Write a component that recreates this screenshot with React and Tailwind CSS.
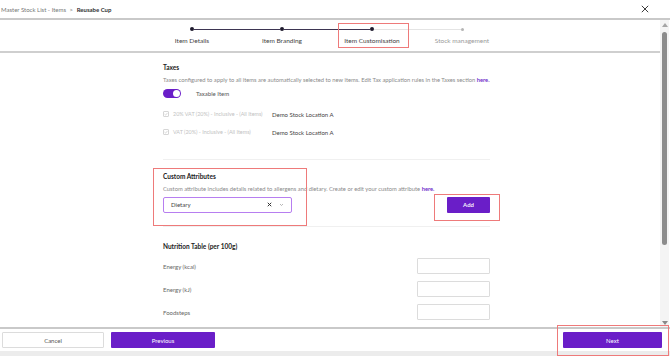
import React from 'react';

const PURPLE = 'bg-[#6a1ec8]';

const steps = [
  { label: 'Item Details', done: true },
  { label: 'Item Branding', done: true },
  { label: 'Item Customisation', done: true },
  { label: 'Stock management', done: false },
];

const Stepper = () => (
  <div className="h-[33px] border-b-2 border-[#cfcfcf] pl-[147px] flex">
    {steps.map((s, i) => {
      const leftDark = i > 0 && s.done;
      const rightDark = i < steps.length - 1 && steps[i + 1].done;
      return (
        <div key={s.label} className="w-[90px] flex flex-col items-center">
          <div className="w-full h-[18px] flex items-center">
            <div className={`flex-1 h-px ${i === 0 ? '' : leftDark ? 'bg-[#3d3552]' : 'bg-[#e4e4e4]'}`} />
            {s.done ? (
              <div className="w-[4px] h-[4px] rounded-full bg-[#1e1b2e]" />
            ) : (
              <div className="w-[3px] h-[3px] rounded-full bg-[#b5b5b5]" />
            )}
            <div className={`flex-1 h-px ${i === steps.length - 1 ? '' : rightDark ? 'bg-[#3d3552]' : 'bg-[#e4e4e4]'}`} />
          </div>
          <div className={`text-[6.5px] leading-none whitespace-nowrap ${s.done ? 'text-[#444]' : 'text-[#9a9a9a]'}`}>{s.label}</div>
        </div>
      );
    })}
  </div>
);

const Check = () => (
  <span className="w-[6px] h-[6px] border border-[#d6d6d6] rounded-[1px] flex items-center justify-center">
    <svg width="4" height="4" viewBox="0 0 8 8"><path d="M1 4.2 3.2 6.2 7 1.8" stroke="#c9c9c9" strokeWidth="1.4" fill="none" /></svg>
  </span>
);

const TaxRow = ({ label }) => (
  <div className="flex items-center h-[18px] whitespace-nowrap">
    <div className="w-[109px] flex items-center gap-[4px]">
      <Check />
      <span className="text-[5.4px] text-[#c2c2c2]">{label}</span>
    </div>
    <span className="text-[6px] text-[#444]">Demo Stock Location A</span>
  </div>
);

const NutritionRow = ({ label }) => (
  <div className="flex items-center justify-between h-[23px]">
    <span className="text-[6px] text-[#666]">{label}</span>
    <div className="w-[73px] h-[16px] border border-[#dcdcdc] rounded-[1px] bg-white" />
  </div>
);

export default function App() {
  return (
    <div className="w-[670px] h-[356px] bg-white flex flex-col overflow-hidden relative" style={{ fontFamily: 'Lato, "Open Sans", sans-serif' }}>
      {/* header */}
      <div className="h-[20px] border-b-2 border-[#c9c9c9] flex items-center justify-between pl-[1px] pr-[21px]">
        <div className="text-[6px] text-[#777]">
          Master Stock List - Items <span className="mx-[2px]">&gt;</span> <span className="font-bold text-[#333]">Reusabe Cup</span>
        </div>
        <svg width="8" height="8" viewBox="0 0 10 10"><path d="M1 1 9 9M9 1 1 9" stroke="#333" strokeWidth="1.2" /></svg>
      </div>

      {/* main */}
      <div className="flex-1 flex min-h-0">
        <div className="flex-1 flex flex-col min-w-0">
          <Stepper />
          <div className="flex-1 pl-[163px] pr-[170px] pt-[10px]">
            <div className="text-[6.5px] font-bold text-[#222]">Taxes</div>
            <div className="text-[5.8px] text-[#8a8a8a] mt-[3px] whitespace-nowrap">
              Taxes configured to apply to all items are automatically selected to new items. Edit Tax application rules in the Taxes section <span className="text-[#6a1ec8] font-semibold">here.</span>
            </div>
            <div className="flex items-center mt-[4px] h-[10px]">
              <div className={`w-[18px] h-[9px] rounded-full ${PURPLE} flex items-center justify-end pr-[1px]`}>
                <div className="w-[7px] h-[7px] rounded-full bg-white" />
              </div>
              <span className="text-[6px] text-[#555] ml-[15px]">Taxable Item</span>
            </div>
            <div className="mt-[7px]">
              <TaxRow label="20% VAT (20%) - Inclusive - (All Items)" />
              <TaxRow label="VAT (20%) - Inclusive - (All Items)" />
            </div>
            <div className="h-px bg-[#f0f0f0] mt-[18px]" />

            <div className="text-[6.5px] font-bold text-[#222] mt-[12px]">Custom Attributes</div>
            <div className="text-[5.8px] text-[#8a8a8a] mt-[3px] whitespace-nowrap">
              Custom attribute includes details related to allergens and dietary. Create or edit your custom attribute <span className="text-[#6a1ec8] font-semibold">here.</span>
            </div>
            <div className="flex items-center justify-between mt-[3px]">
              <div className="w-[129px] h-[16px] border border-[#b77ef0] rounded-[2px] flex items-center px-[7px]">
                <span className="text-[6px] text-[#444] flex-1">Dietary</span>
                <svg width="5" height="5" viewBox="0 0 10 10"><path d="M1.5 1.5 8.5 8.5M8.5 1.5 1.5 8.5" stroke="#333" strokeWidth="2" /></svg>
                <svg width="5" height="5" viewBox="0 0 10 10" className="ml-[7px]"><path d="M2 4 5 7 8 4" stroke="#888" strokeWidth="1.2" fill="none" /></svg>
              </div>
              <button className={`w-[43px] h-[16px] ${PURPLE} rounded-[1px] text-white text-[6px] font-semibold`}>Add</button>
            </div>
            <div className="h-px bg-[#f0f0f0] mt-[13px]" />

            <div className="text-[6.5px] font-bold text-[#222] mt-[15px]">Nutrition Table (per 100g)</div>
            <div className="mt-[3px]">
              <NutritionRow label="Energy (kcal)" />
              <NutritionRow label="Energy (kJ)" />
              <NutritionRow label="Foodsteps" />
            </div>
          </div>
        </div>
        {/* scrollbar */}
        <div className="w-[9px] bg-[#f4f4f4] flex flex-col items-center mr-[1px]">
          <div className="w-0 h-0 mt-[3px] border-l-[3px] border-r-[3px] border-b-[4px] border-l-transparent border-r-transparent border-b-[#a5a5a5]" />
          <div className="w-[5px] h-[213px] mt-[5px] rounded-full bg-[#8c8c8c]" />
          <div className="flex-1" />
          <div className="w-0 h-0 mb-[2px] border-l-[3px] border-r-[3px] border-t-[4px] border-l-transparent border-r-transparent border-t-[#8a8a8a]" />
        </div>
      </div>

      {/* footer */}
      <div className="h-[29px] border-t-2 border-[#c9c9c9] flex flex-col">
        <div className="flex items-center justify-between h-[22px] pl-[2px] pr-[8px]">
          <div className="flex items-center gap-[7px]">
            <button className="w-[102px] h-[16px] border border-[#dcdcdc] rounded-[1px] bg-white text-[6px] text-[#555]">Cancel</button>
            <button className={`w-[104px] h-[16px] ${PURPLE} rounded-[1px] text-white text-[6px]`}>Previous</button>
          </div>
          <button className={`w-[99px] h-[16px] ${PURPLE} rounded-[1px] text-white text-[6px]`}>Next</button>
        </div>
        <div className="flex-1 bg-[#ececec]" />
      </div>

      {/* annotation boxes */}
      <div className="absolute left-[338px] top-[23px] w-[71px] h-[25px] border border-[#ee7a7a] pointer-events-none" />
      <div className="absolute left-[153px] top-[168px] w-[154px] h-[58px] border border-[#ee7a7a] pointer-events-none" />
      <div className="absolute left-[434px] top-[194px] w-[66px] h-[27px] border border-[#ee7a7a] pointer-events-none" />
      <div className="absolute left-[557px] top-[325px] w-[112px] h-[31px] border border-[#ee7a7a] pointer-events-none" />
    </div>
  );
}
